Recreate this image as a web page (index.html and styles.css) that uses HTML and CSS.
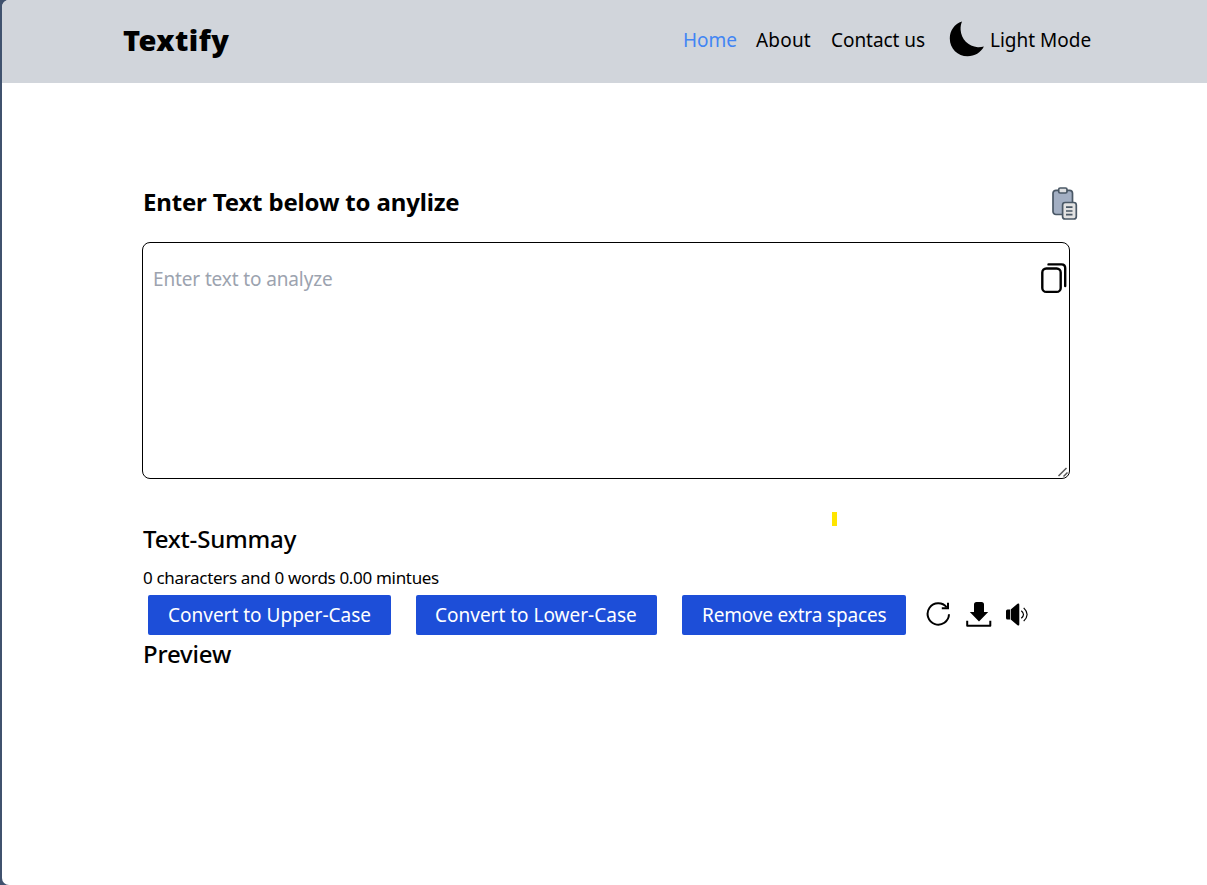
FILE: index.html
```html
<!DOCTYPE html>
<html lang="en">
<head>
<meta charset="utf-8">
<title>Textify</title>
<link rel="stylesheet" href="styles.css">
</head>
<body>
<div class="window">
  <header class="header">
    <div class="brand">Textify</div>
    <nav class="nav">
      <a class="link home">Home</a>
      <a class="link about">About</a>
      <a class="link contact">Contact us</a>
      <svg class="moon" width="36" height="36" viewBox="0 0 36 36"><path d="M13 .5C5.500 3 .8 9.500.8 17.500C.8 27.500 8.700 35.300 18.600 35.300C25.600 35.300 31.800 31.500 34.900 25.500C32.700 26.100 30.800 26.300 28.700 26.200C19.400 25.600 12 18 11.600 8.800C11.500 5.700 11.900 3 13 .5Z"/></svg>
      <span class="link mode">Light Mode</span>
    </nav>
  </header>
  <main class="main">
    <div class="title-row">
      <h1 class="title"><span>Enter Text below to anylize</span></h1>
      <svg class="paste" width="26" height="33" viewBox="0 0 26 33" stroke="#4a5866" stroke-width="1.700">
        <rect x="1" y="3.300" width="19.500" height="24.200" rx="3" fill="#a3afc3"/>
        <rect x="6.700" y="1" width="8.300" height="5" rx="1.500" fill="#dedfe1"/>
        <rect x="10.600" y="15.500" width="13.700" height="16.500" rx="2.500" fill="#e2e2e2"/>
        <path d="M14 20.200h6.500M14 24h6.500M14 27.700h6.500"/>
      </svg>
    </div>
    <div class="editor">
      <span class="placeholder">Enter text to analyze</span>
      <svg class="copy" width="28" height="32" viewBox="0 0 28 32" fill="none" stroke="#000" stroke-width="2.400" stroke-linecap="round"><rect x="2.300" y="5.500" width="18.400" height="23.400" rx="4"/><path d="M8.500 1.400H21.500Q25.200 1.400 25.200 5.100V23"/></svg>
      <svg class="grip" width="12" height="11" viewBox="0 0 12 11" stroke="#555" stroke-width="1.500"><path d="M1.500 9L9.500 1M6.500 9.500L10.500 5.500"/></svg>
    </div>
    <h2 class="heading summary"><span>Text-Summay</span></h2>
    <p class="stats"><span>0 characters and 0 words 0.00 mintues</span></p>
    <div class="actions">
      <button class="button upper">Convert to Upper-Case</button>
      <button class="button lower">Convert to Lower-Case</button>
      <button class="button spaces">Remove extra spaces</button>
      <svg class="tool" width="26" height="26" viewBox="0 0 26 26" fill="none" stroke="#000" stroke-width="2"><path d="M20.700 5.300A10.700 10.700 0 1 0 23 12.300"/><path d="M22 .8V6.300H15.800"/></svg>
      <svg class="tool download" width="26" height="26" viewBox="0 0 26 26"><path d="M10.500 0H15.500Q18 0 18 2.500V10H22.200L13 19.500L3.800 10H8V2.500Q8 0 10.500 0Z"/><path d="M1.200 18.800V23.700H24.300V18.800" fill="none" stroke="#000" stroke-width="2" stroke-linejoin="round"/></svg>
      <svg class="tool speaker" width="24" height="24" viewBox="0 0 24 24"><path d="M1.500 6.500H4V16.500H1.500Q0 16.500 0 15V8Q0 6.500 1.500 6.500ZM4.700 6.500L11.500.8Q13.300-.3 13.300 1.700V21.300Q13.300 23.300 11.500 22.200L4.700 16.500Z"/><path d="M15.300 7.800Q19.700 11.500 15.300 15.200M17.700 4.900Q24.500 11.500 17.700 18.100" fill="none" stroke="#000" stroke-width="1.200"/></svg>
    </div>
    <h2 class="heading preview"><span>Preview</span></h2>
  </main>
  <div class="marker"></div>
</div>
</body>
</html>
```

FILE: styles.css
```css
* { box-sizing: border-box; }
body {
  margin: 0;
  height: 885px;
  padding-left: 2px;
  background: #40526e;
  color: #000;
  font-family: "Noto Sans", "Open Sans", sans-serif;
  overflow: hidden;
}
.window {
  height: 885px;
  background: #fff;
  border-radius: 7px 0 0 7px;
  overflow: hidden;
}
.header {
  display: flex;
  justify-content: space-between;
  height: 83px;
  padding: 0 114px 0 121px;
  background: #d1d5db;
}
.brand {
  font-size: 29px;
  font-weight: 900;
  letter-spacing: 0.45px;
  line-height: 40px;
  padding-top: 20px;
}
.nav {
  display: flex;
  align-items: flex-start;
  padding-top: 21px;
}
.link {
  font-size: 19px;
  line-height: 38px;
  white-space: nowrap;
}
.home { width: 73px; color: #4285f4; }
.about { width: 75px; letter-spacing: 0.2px; }
.contact { width: 118px; letter-spacing: -0.05px; }
.moon { flex: none; }
.mode { width: 103px; margin-left: 5px; }
.main { padding: 101px 137px 0 140px; }
.title-row {
  display: flex;
  justify-content: space-between;
  padding: 2px 0 0 1px;
  height: 58px;
}
.title {
  margin: 0;
  font-size: 24px;
  font-weight: 700;
  letter-spacing: -0.17px;
  line-height: 32px;
}
.paste { flex: none; margin: 1px -8px 0 0; }
.editor {
  display: flex;
  justify-content: space-between;
  position: relative;
  width: 928px;
  height: 237px;
  padding: 20px 1px 0 10px;
  border: 1px solid #000;
  border-radius: 8px;
}
.placeholder {
  font-size: 19px;
  letter-spacing: -0.13px;
  line-height: 32px;
  color: #9ca3af;
}
.grip { position: absolute; right: 0; bottom: 0; }
.heading {
  margin: 0 0 0 1px;
  font-size: 24px;
  font-weight: 500;
  letter-spacing: -0.18px;
  line-height: 36px;
}
.summary { margin-top: 42px; }
.stats {
  margin: 7px 0 0 1px;
  font-size: 17px;
  letter-spacing: -0.32px;
  line-height: 28px;
}
.actions {
  display: flex;
  height: 40px;
  margin: 3px 0 0 6px;
}
.button {
  height: 40px;
  padding: 1px 0 0 20px;
  border: 0;
  border-radius: 2px;
  background: #1d4ed8;
  color: #fff;
  font: 19px/39px "Noto Sans", "Open Sans", sans-serif;
  text-align: left;
  white-space: nowrap;
  margin-right: 25px;
}
.upper { width: 243px; }
.lower { width: 241px; padding-left: 19px; }
.spaces { width: 224px; margin-right: 20px; letter-spacing: -0.16px; }
.tool { flex: none; margin-top: 7px; }
.download { margin-left: 14px; }
.speaker { margin: 8px 0 0 14px; }
.preview { margin-top: 1px; }
.marker {
  position: absolute;
  left: 832px;
  top: 512px;
  width: 5px;
  height: 14px;
  background: #ffe500;
}
```
